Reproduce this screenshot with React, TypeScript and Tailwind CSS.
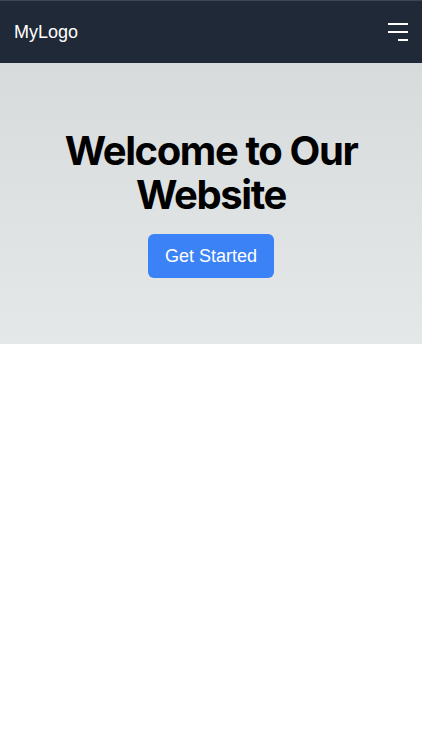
export default function App() {
  return (
    <div className="min-h-screen bg-white" style={{ fontFamily: "'Liberation Sans', Arial, sans-serif" }}>
      <nav className="flex h-[63px] items-center justify-between border-t border-[#3d4654] bg-[#1f2937] px-[14px]">
        <span className="text-lg text-white">MyLogo</span>
        <button className="flex flex-col items-end gap-1.5 p-0" aria-label="Menu">
          <span className="block h-0.5 w-5 bg-white" />
          <span className="block h-0.5 w-5 bg-white" />
          <span className="block h-0.5 w-2.5 bg-white" />
        </button>
      </nav>

      <section className="flex flex-col items-center bg-gradient-to-b from-[#d7dbdc] to-[#e5e8e9] px-6 pt-[66px] pb-[66px] text-center">
        <h1
          className="text-[40px] leading-[44px] font-bold tracking-[-0.035em] text-black"
          style={{ fontFamily: "Inter, 'Noto Sans', sans-serif" }}
        >
          Welcome to Our Website
        </h1>
        <button className="mt-[17px] rounded-md bg-[#3b82f6] px-[17px] py-2 text-lg text-white">
          Get Started
        </button>
      </section>
    </div>
  );
}
